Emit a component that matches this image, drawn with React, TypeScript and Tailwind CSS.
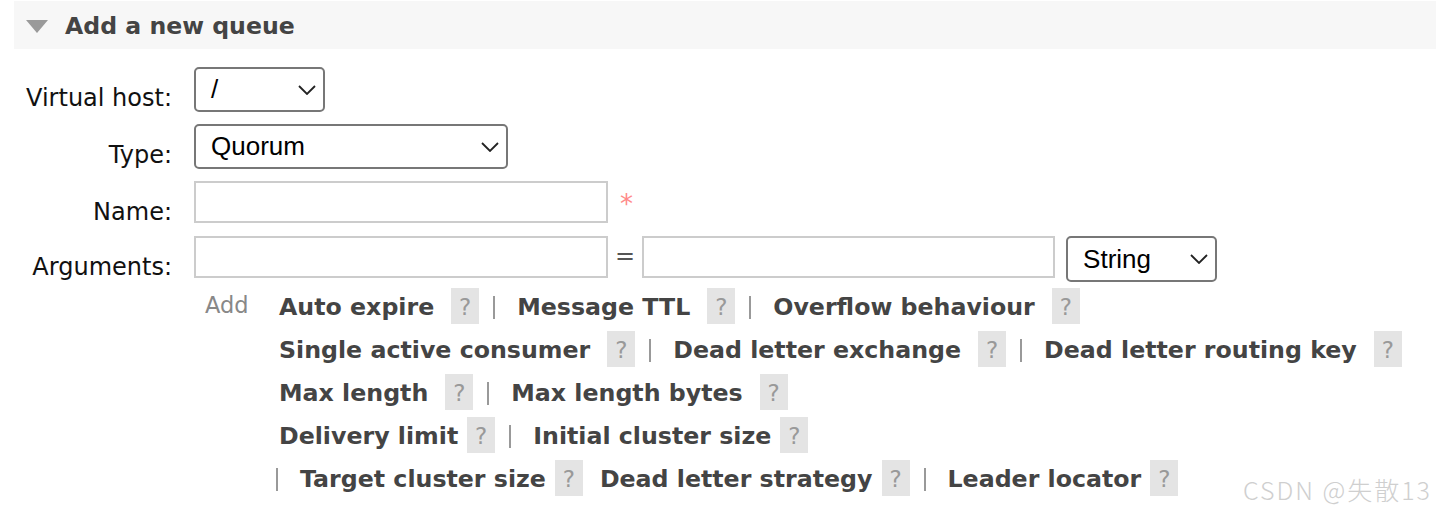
import React from "react";

type Link = { label: string; tight?: boolean; sep?: boolean };

// each row of argument shortcuts, laid out as in the reference
const rows: { lead?: boolean; items: Link[] }[] = [
  {
    items: [
      { label: "Auto expire", sep: true },
      { label: "Message TTL", sep: true },
      { label: "Overflow behaviour" },
    ],
  },
  {
    items: [
      { label: "Single active consumer", sep: true },
      { label: "Dead letter exchange", sep: true },
      { label: "Dead letter routing key" },
    ],
  },
  {
    items: [{ label: "Max length", sep: true }, { label: "Max length bytes" }],
  },
  {
    items: [
      { label: "Delivery limit", tight: true, sep: true },
      { label: "Initial cluster size", tight: true },
    ],
  },
  {
    lead: true,
    items: [
      { label: "Target cluster size", tight: true },
      { label: "Dead letter strategy", tight: true, sep: true },
      { label: "Leader locator", tight: true },
    ],
  },
];

const Chevron = () => (
  <svg width="18" height="10" viewBox="0 0 18 10" fill="none">
    <path d="M1 1l8 8 8-8" stroke="#222" strokeWidth="1.8" />
  </svg>
);

const FakeSelect = ({ value, className }: { value: string; className: string }) => (
  <div
    className={`flex items-center justify-between rounded-[5px] border-2 border-[#777] bg-white pl-[15px] pr-[7px] font-['Liberation_Sans',Arial,sans-serif] text-[26px] text-black ${className}`}
  >
    <span>{value}</span>
    <Chevron />
  </div>
);

const Help = () => (
  <span className="flex h-[36px] w-[28px] items-center justify-center bg-[#e4e4e4] pt-[2px] text-[23px] font-normal text-[#999]">
    ?
  </span>
);

const Bar = ({ className = "ml-[14px] mr-[22px]" }: { className?: string }) => (
  <span className={`mt-[3px] h-[23px] w-[2px] bg-[#999] ${className}`} />
);

const Label = ({ children }: { children: React.ReactNode }) => (
  <div className="pt-[17px] text-right text-[24px] leading-[28px] text-[#111]">{children}</div>
);

export default function App() {
  return (
    <div className="relative h-[522px] w-full overflow-hidden bg-white font-['DejaVu_Sans',Verdana,sans-serif]">
      <div className="ml-[14px] mt-[1px] flex h-[48px] items-center bg-[#f7f7f7]">
        <svg className="ml-[12px] mt-[2px]" width="22" height="13" viewBox="0 0 22 13">
          <path d="M0 0h22L11 13z" fill="#9a9a9a" />
        </svg>
        <h2 className="ml-[17px] mt-[4px] text-[23.6px] font-bold text-[#444]">Add a new queue</h2>
      </div>

      <div className="mt-[18px] grid grid-cols-[172px_auto] gap-x-[22px]">
        <Label>Virtual host:</Label>
        <div className="h-[57px]">
          <FakeSelect value="/" className="h-[45px] w-[131px]" />
        </div>

        <Label>Type:</Label>
        <div className="h-[57px]">
          <FakeSelect value="Quorum" className="h-[45px] w-[314px]" />
        </div>

        <Label>Name:</Label>
        <div className="flex h-[55px] items-start">
          <input className="h-[42px] w-[414px] border-2 border-[#ccc] bg-white outline-none" />
          <span className="ml-[12px] mt-[9px] text-[26px] leading-[28px] text-[#ff8a8a]">*</span>
        </div>

        <Label>Arguments:</Label>
        <div className="flex h-[52px] items-start">
          <input className="h-[42px] w-[414px] border-2 border-[#ccc] bg-white outline-none" />
          <span className="mx-[7px] mt-[6px] text-[24px] leading-[28px] text-[#555]">=</span>
          <input className="h-[42px] w-[413px] border-2 border-[#ccc] bg-white outline-none" />
          <FakeSelect value="String" className="ml-[11px] h-[46px] w-[151px]" />
        </div>

        <div />
        <div className="flex items-start">
          <span className="w-[85px] pl-[11px] pt-[3px] text-[22.5px] leading-[28px] text-[#888]">Add</span>
          <div className="flex flex-col gap-[7px]">
            {rows.map((row, i) => (
              <div key={i} className="flex h-[36px] items-center">
                {row.lead && <Bar className="-ml-[3px] mr-[22px]" />}
                {row.items.map((it, j) => (
                  <React.Fragment key={j}>
                    <span
                      className={`pt-[4px] text-[23.7px] font-bold whitespace-nowrap text-[#444] ${it.tight ? "mr-[9px]" : "mr-[17px]"}`}
                    >
                      {it.label}
                    </span>
                    <Help />
                    {it.sep ? <Bar /> : j < row.items.length - 1 && <span className="w-[17px]" />}
                  </React.Fragment>
                ))}
              </div>
            ))}
          </div>
        </div>
      </div>

      <div className="absolute bottom-[14px] right-[4px] font-['Noto_Sans_CJK_SC',sans-serif] text-[25px] font-light tracking-[2px] text-[#cfcfcf]">
        CSDN @失散13
      </div>
    </div>
  );
}
